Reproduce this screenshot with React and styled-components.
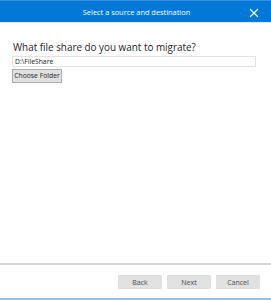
import React from 'react';
import styled, { createGlobalStyle } from 'styled-components';

const GlobalStyle = createGlobalStyle`
  *, *::before, *::after {
    box-sizing: border-box;
  }
  html, body {
    margin: 0;
    padding: 0;
    background: #ffffff;
  }
  body {
    font-family: "Open Sans", "Noto Sans", sans-serif;
  }
`;

const Dialog = styled.div`
  width: 271px;
  height: 300px;
  display: flex;
  flex-direction: column;
  background: #ffffff;
  border-bottom: 2px solid #8cc4ec;
`;

const TitleBar = styled.div`
  height: 23px;
  flex: none;
  display: flex;
  align-items: center;
  justify-content: center;
  position: relative;
  background: #0078d7;
  border-top: 1px solid #3d8fd6;
  border-bottom: 1px solid #d6e9f7;
  color: #ffffff;
  font-size: 7.4px;
  padding-left: 2px;
`;

const CloseButton = styled.button`
  position: absolute;
  right: 12px;
  top: 7px;
  width: 10px;
  height: 10px;
  padding: 0;
  border: none;
  background: transparent;
  display: flex;
  align-items: center;
  justify-content: center;
`;

const Body = styled.div`
  flex: 1;
  padding: 17px 15px 0 12px;
  display: flex;
  flex-direction: column;
`;

const Question = styled.div`
  font-size: 9.9px;
  color: #1e1e1e;
  margin-left: 1px;
  margin-bottom: 2px;
  line-height: 14px;
`;

const PathInput = styled.div`
  height: 11px;
  border: 1px solid #e3e3e3;
  padding: 0 2px;
  font-size: 6.8px;
  line-height: 9px;
  color: #222222;
  margin-bottom: 2px;
  white-space: nowrap;
`;

const GrayButton = styled.button`
  font-family: "Open Sans", "Noto Sans", sans-serif;
  font-size: ${p => p.$fs || 7}px;
  color: ${p => (p.$muted ? '#4a4a4a' : '#222222')};
  background: #e1e1e1;
  border: 1px solid ${p => (p.$bordered ? '#adadad' : '#e1e1e1')};
  height: ${p => p.$h || 14}px;
  width: ${p => (p.$w ? p.$w + 'px' : 'auto')};
  padding: 0;
  line-height: 1;
  white-space: nowrap;
  cursor: pointer;
`;

const FolderRow = styled.div`
  display: flex;
`;

const Footer = styled.div`
  flex: none;
  height: 35px;
  border-top: 2px solid #d6d6d6;
  display: flex;
  justify-content: flex-end;
  align-items: flex-start;
  gap: 5px;
  padding: 10px 11px 0 0;
`;

function App() {
  return (
    <>
      <GlobalStyle />
      <Dialog>
        <TitleBar>
          Select a source and destination
          <CloseButton aria-label="Close">
            <svg width="10" height="10" viewBox="0 0 10 10">
              <path d="M1 1 L9 9 M9 1 L1 9" stroke="#ffffff" strokeWidth="1.1" fill="none" />
            </svg>
          </CloseButton>
        </TitleBar>
        <Body>
          <Question>What file share do you want to migrate?</Question>
          <PathInput>D:\FileShare</PathInput>
          <FolderRow>
            <GrayButton $bordered $w={50} $fs={6.8}>Choose Folder</GrayButton>
          </FolderRow>
        </Body>
        <Footer>
          <GrayButton $muted $w={44}>Back</GrayButton>
          <GrayButton $muted $w={44}>Next</GrayButton>
          <GrayButton $muted $w={44}>Cancel</GrayButton>
        </Footer>
      </Dialog>
    </>
  );
}

export default App;
